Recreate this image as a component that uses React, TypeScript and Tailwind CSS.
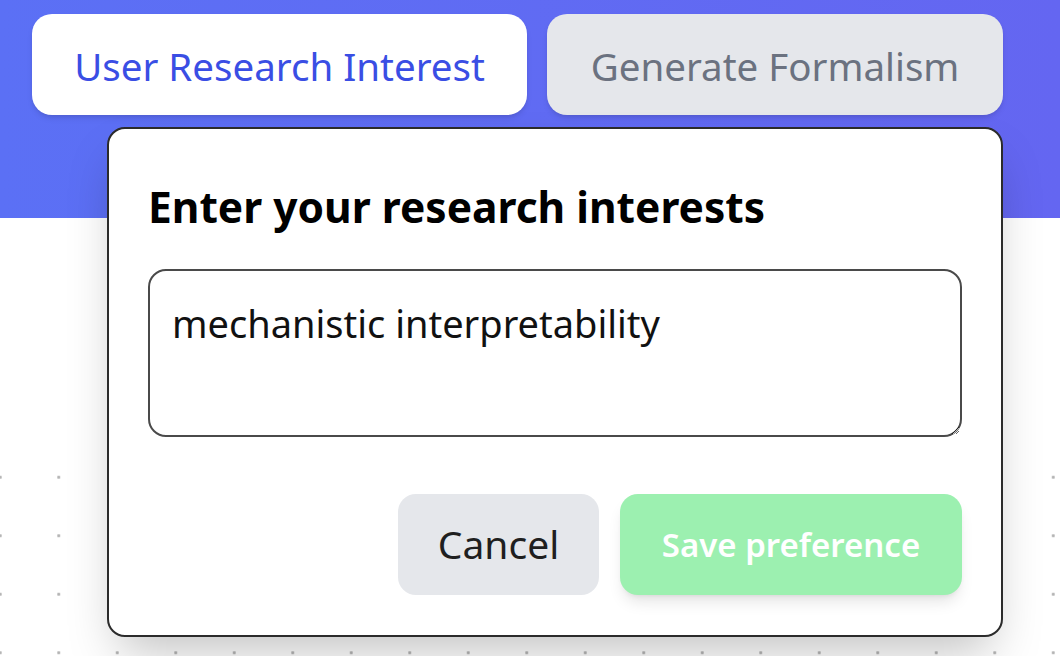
import { useState } from 'react';

export default function App() {
  const [interest, setInterest] = useState('mechanistic interpretability');

  return (
    <div className="relative w-[1060px] h-[656px] overflow-hidden bg-white font-['Noto_Sans',sans-serif] flex flex-col">
      {/* Top bar with tabs */}
      <header className="h-[218px] shrink-0 bg-gradient-to-r from-[#5b70f5] to-[#6466f1] px-[32px] pt-[14px]">
        <div className="flex gap-[20px]">
          <button className="w-[495px] h-[101px] pt-[5px] rounded-[20px] bg-white text-[38.5px] text-[#3a4ee4] shadow-md">
            User Research Interest
          </button>
          <button className="w-[456px] h-[101px] pt-[5px] rounded-[20px] bg-[#e5e7eb] text-[38.5px] text-[#6b7280] shadow-md">
            Generate Formalism
          </button>
        </div>
      </header>

      {/* Workspace */}
      <div className="h-[230px] shrink-0 bg-white"></div>
      <div className="flex-1 bg-white bg-[radial-gradient(circle,#b4b4b4_1.3px,transparent_1.7px)] bg-[length:58.5px_58.5px] bg-[position:-29px_0px]"></div>

      {/* Research interest popover */}
      <div className="absolute left-[107px] top-[127px] w-[896px] h-[510px] rounded-[18px] border-2 border-[#2b2b2b] bg-white shadow-2xl px-[39px] pt-[50px]">
        <h2 className="text-[42.5px] leading-[56px] font-bold text-black">Enter your research interests</h2>
        <textarea
          value={interest}
          onChange={(e) => setInterest(e.target.value)}
          className="mt-[34px] block w-full h-[168px] rounded-[18px] border-2 border-[#4a4a4a] px-[22px] pt-[27px] text-[38px] leading-[50px] text-[#111] outline-none"
        />
        <div className="mt-[57px] flex justify-end gap-[21px]">
          <button className="w-[201px] h-[101px] rounded-[18px] bg-[#e5e7eb] text-[39px] text-[#1f1f1f]">Cancel</button>
          <button className="w-[342px] h-[101px] rounded-[18px] bg-[#9cf0b0] text-[33px] font-semibold text-white shadow-lg">
            Save preference
          </button>
        </div>
      </div>
    </div>
  );
}
